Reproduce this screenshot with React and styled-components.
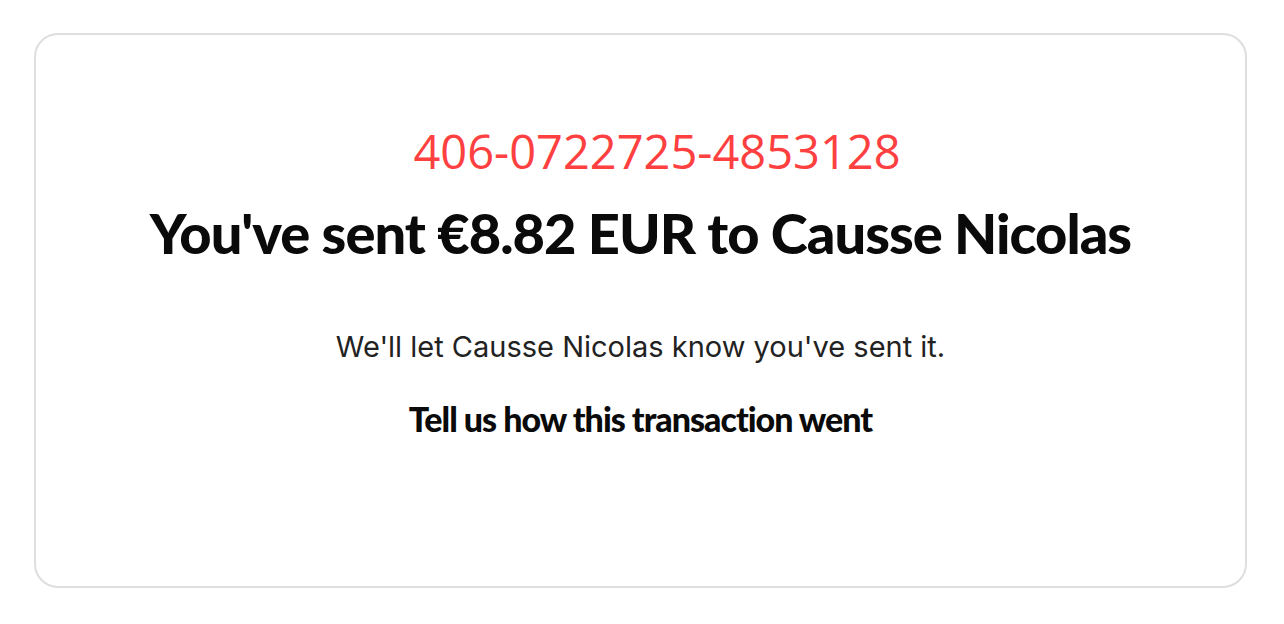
import React from "react";
import styled, { createGlobalStyle } from "styled-components";

const GlobalStyle = createGlobalStyle`
  html, body {
    margin: 0;
    padding: 0;
    background: #ffffff;
  }
  body {
    font-family: "Inter", "Liberation Sans", sans-serif;
  }
`;

const Page = styled.div`
  padding: 33px 37px 37px 34px;
`;

const Card = styled.section`
  height: 555px;
  box-sizing: border-box;
  border: 2px solid #dedede;
  border-radius: 24px;
  display: flex;
  flex-direction: column;
  align-items: center;
  padding-top: 88px;
  text-align: center;
`;

const Reference = styled.div`
  padding-left: 33px;
  font-family: "Open Sans", "Liberation Sans", sans-serif;
  font-size: 47px;
  line-height: 56px;
  color: #ff4040;
`;

const Title = styled.h1`
  margin: 22px 0 0;
  font-family: "Lato", "Liberation Sans", sans-serif;
  font-weight: 900;
  font-size: 56px;
  line-height: 64px;
  letter-spacing: -1px;
  color: #0a0a0a;
`;

const Note = styled.p`
  margin: 64px 0 0;
  font-family: "Inter", "Liberation Sans", sans-serif;
  font-size: 29px;
  line-height: 36px;
  color: #222222;
  letter-spacing: 0;
`;

const Prompt = styled.p`
  margin: 34px 0 0;
  font-family: "Lato", "Liberation Sans", sans-serif;
  font-weight: 900;
  font-size: 34px;
  line-height: 40px;
  letter-spacing: -1px;
  color: #0a0a0a;
`;

export default function App() {
  return (
    <>
      <GlobalStyle />
      <Page>
        <Card>
          <Reference>406-0722725-4853128</Reference>
          <Title>You've sent €8.82 EUR to Causse Nicolas</Title>
          <Note>We'll let Causse Nicolas know you've sent it.</Note>
          <Prompt>Tell us how this transaction went</Prompt>
        </Card>
      </Page>
    </>
  );
}
